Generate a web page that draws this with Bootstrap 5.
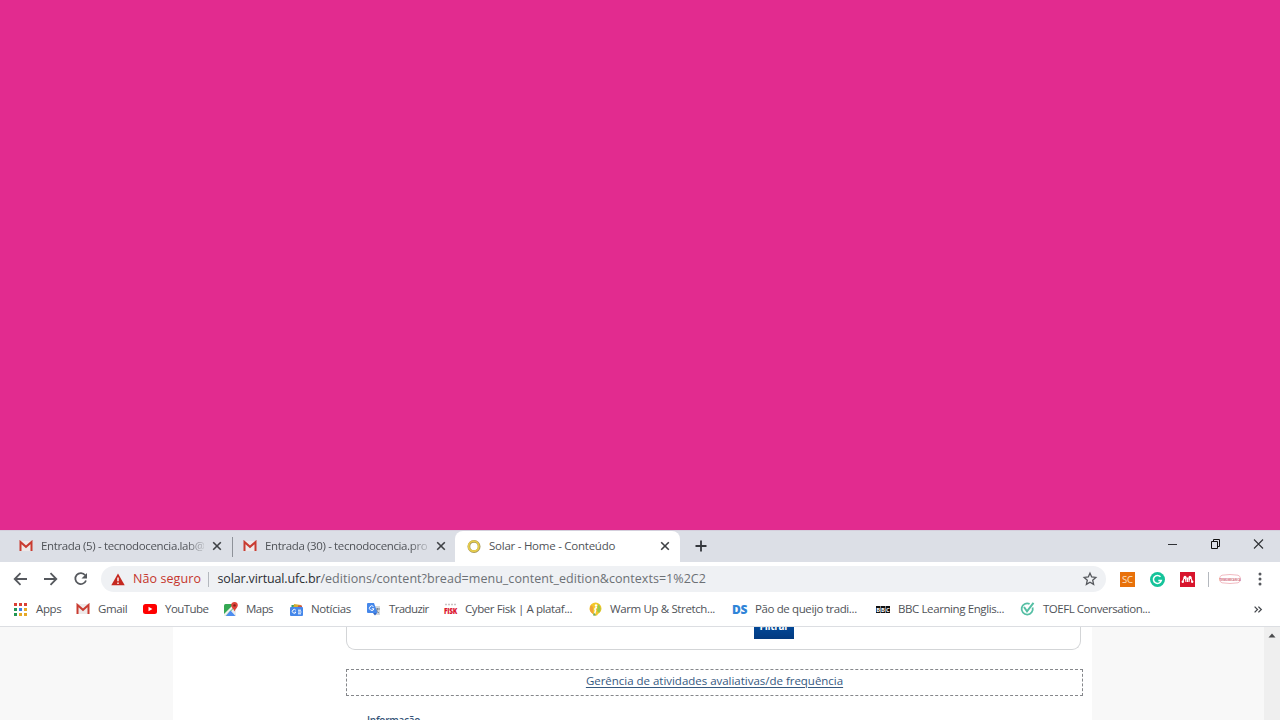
<!DOCTYPE html>
<html lang="pt-BR">
<head>
<meta charset="utf-8">
<title>Solar - Home - Conteúdo</title>
<link href="https://cdn.jsdelivr.net/npm/bootstrap@5.3.0/dist/css/bootstrap.min.css" rel="stylesheet">
<style>
body{width:1280px;height:720px;overflow:hidden;background:#fff;font-family:"Open Sans","Noto Sans",sans-serif;font-size:11.5px;line-height:16px;color:#505358}
svg{display:block;flex:none;overflow:visible}
.cover{height:530px;background:#e22b8f}
.tabstrip{height:32px;background:#dcdfe6;border-top:1px solid #d5cfdc}
.tab{height:31px;letter-spacing:-.37px;padding-bottom:1px}
.tab1{width:232px;padding-left:19px}
.tab2{width:223px;padding-left:11px}
.tab3{width:225px;padding-left:12px;background:#fff;border-radius:8px 8px 0 0;letter-spacing:-.25px}
.tabname{width:163px;margin-left:8px;overflow:hidden}
.fade-end{-webkit-mask-image:linear-gradient(90deg,#000 145px,rgba(0,0,0,.2));mask-image:linear-gradient(90deg,#000 145px,rgba(0,0,0,.2))}
.tabline{width:1px;height:20px;background:#8e9299}
.toolbar{height:34px}
.pill{width:1005px;height:26px;border-radius:13px;background:#eff1f4;font-size:12.5px;margin-left:12px}
.warn{color:#c5352c;letter-spacing:.08px;width:75px;margin-left:8px}
.host{color:#2b2e33;letter-spacing:-.15px;margin-left:8.5px}
.path{color:#6c7075;letter-spacing:.04px}
.vline{width:1px;height:15px;background:#b4b8be}
.marks{height:31px;padding-left:14px;border-bottom:1px solid #dcdee2}
.bm{display:flex;align-items:center;gap:8px;flex:none;height:26px}
.page{height:93px;overflow:hidden}
.side{background:#f8f8f8}
.main{width:919px;padding-left:173px}
.panel{width:735px;height:23px;border:1px solid #d3d5d7;border-top:0;border-radius:0 0 9px 9px;padding-left:407px}
.filter{width:40px;height:12px;background:linear-gradient(#024796,#023a80);color:#fff;font-weight:700;font-size:10px;line-height:16px;overflow:hidden;text-align:center;letter-spacing:-.3px}
.filter span{display:block;margin-top:-9px}
.dash{width:737px;height:27px;margin-top:19px;padding-bottom:3px;border:1px dashed #85878b;letter-spacing:-.02px}
.dash a{color:#36597f;text-underline-offset:1.5px}
.info{color:#365478;font-size:10px;font-weight:600;letter-spacing:-.25px;margin:16px 0 0 21px}
.scroll{width:16px;background:#efefef;padding:6px 0 0 4px}
</style>
</head>
<body>
<svg width="0" height="0" class="position-absolute"><defs>
<symbol id="gm" viewBox="0 0 14 12"><rect x="1" y="1" width="12" height="10" fill="#eee9e9"/><path d="M1.500 11V2L7 6.800 12.500 2v9" fill="none" stroke="#c93c31" stroke-width="2"/></symbol>
<symbol id="x" viewBox="0 0 10 10"><path d="M1.200 1.200l7.600 7.600M8.800 1.200L1.200 8.800" stroke="#3e4145" stroke-width="1.600"/></symbol>
</defs></svg>
<div class="cover"></div>
<div class="tabstrip d-flex align-items-center text-nowrap">
  <div class="tab tab1 d-flex align-items-center"><svg width="14" height="12"><use href="#gm"/></svg><span class="tabname fade-end">Entrada (5) - tecnodocencia.lab@</span><svg class="ms-2" width="10" height="10"><use href="#x"/></svg></div>
  <span class="tabline" style="margin-right:-1px"></span>
  <div class="tab tab2 d-flex align-items-center"><svg width="14" height="12"><use href="#gm"/></svg><span class="tabname fade-end">Entrada (30) - tecnodocencia.pro</span><svg class="ms-2" width="10" height="10"><use href="#x"/></svg></div>
  <div class="tab tab3 d-flex align-items-center"><svg width="14" height="15" viewBox="0 0 15 15"><circle cx="7.500" cy="7.500" r="5.500" fill="#fff" stroke="#a5965c" stroke-width="3"/><circle cx="7.200" cy="7.200" r="5.400" fill="none" stroke="#e7cd4a" stroke-width="2"/></svg><span class="tabname">Solar - Home - Conteúdo</span><svg class="ms-2" width="10" height="10"><use href="#x"/></svg></div>
  <svg style="margin:0 0 1px 15px" width="12" height="12" viewBox="0 0 12 12"><path d="M6 .5v11M.5 6h11" stroke="#34373c" stroke-width="1.800"/></svg>
  <svg class="ms-auto" style="margin:0 16px 6px 0" width="96" height="12" viewBox="0 0 96 12" fill="none" stroke="#303236"><path d="M0 6.500h9"/><path d="M43.500 3.500h6v7h-6zM45.500 3.500v-2h6v7h-2" stroke="#111"/><path d="M86 1.500l9 9M95 1.500l-9 9" stroke-width="1.100"/></svg>
</div>
<div class="toolbar d-flex align-items-center text-nowrap">
  <svg style="margin-left:13px" width="76" height="14" viewBox="0 0 76 14" fill="none" stroke="#55585d" stroke-width="1.800"><path d="M14 7H2M7.500 1.200L1.700 7l5.800 5.800M31 7h12M37.500 1.200L43.300 7l-5.800 5.800"/><path d="M72.200 3.200A5.500 5.500 0 1 0 73 8.500"/><path d="M74 1v5.500h-5.500z" fill="#55585d" stroke="none"/></svg>
  <div class="pill d-flex align-items-center">
    <svg style="margin-left:10px" width="14" height="13" viewBox="0 0 14 13"><path d="M7 .5L13.700 12.300H.3z" fill="#c5281f"/><path d="M7 4.500v3.800M7 9.500V11" stroke="#fff" stroke-width="1.400"/></svg>
    <span class="warn">Não seguro</span><span class="vline"></span><span class="host">solar.virtual.ufc.br</span><span class="path">/editions/content?bread=menu_content_edition&amp;contexts=1%2C2</span>
    <svg class="ms-auto" style="margin-right:9px" width="14" height="14" viewBox="0 0 14 14"><path d="M7 1.200l1.700 3.800 4.100.4-3.100 2.800.9 4.200L7 10.200l-3.600 2.200.9-4.200-3.100-2.800 4.100-.4z" fill="none" stroke="#55585d" stroke-width="1.300"/></svg>
  </div>
  <svg style="margin-left:13.500px" width="15" height="15" viewBox="0 0 15 15"><rect width="15" height="15" fill="#e8710a"/><text x="7.500" y="11" font-size="9.500" text-anchor="middle" fill="#fde3c8">SC</text></svg>
  <svg style="margin-left:15px" width="15" height="15" viewBox="0 0 15 15"><circle cx="7.500" cy="7.500" r="7.500" fill="#15c39a"/><path d="M10.500 4.800A4 4 0 1 0 11.300 8.500H8.300" fill="none" stroke="#fff" stroke-width="1.500"/></svg>
  <svg style="margin-left:15px" width="15" height="15" viewBox="0 0 15 15"><rect width="15" height="15" fill="#d8142c"/><path d="M3 10Q3.400 6 4.800 5.500M7.500 10V6.500M12 10Q11.600 6 10.200 5.500M4.800 5.500Q6 8 6 10M10.200 5.500Q9 8 9 10" fill="none" stroke="#fff" stroke-width="1.100"/><g fill="#fff"><circle cx="5" cy="5.300" r="1.500"/><circle cx="10" cy="5.300" r="1.500"/><circle cx="2.800" cy="9.800" r="1.200"/><circle cx="7.500" cy="6.800" r="1.300"/><circle cx="12.200" cy="9.800" r="1.200"/></g></svg>
  <span class="vline" style="margin-left:13px"></span>
  <svg style="margin-left:10px" width="22" height="10" viewBox="0 0 22 10"><path d="M3 1.200Q11-.2 19 1.200 21.500 2 21.500 5T19 8.800Q11 10.200 3 8.800.5 8 .5 5T3 1.200z" fill="#fff" stroke="#efa9b3" stroke-width=".8"/><text transform="translate(11 6.600) scale(.24 .4)" font-size="10" font-weight="700" text-anchor="middle" fill="#cf6474">TERMOMECANICA</text></svg>
  <svg style="margin-left:17px" width="4" height="14" viewBox="0 0 4 14" fill="#55585d"><circle cx="2" cy="2" r="1.500"/><circle cx="2" cy="7" r="1.500"/><circle cx="2" cy="12" r="1.500"/></svg>
</div>
<div class="marks d-flex text-nowrap">
  <div class="bm" style="width:62px;letter-spacing:-.35px"><svg width="14" height="13" viewBox="0 0 14 13"><path d="M0 0h3v3H0zM5 0h3v3H5zM10 0h3v3h-3z" fill="#da4035"/><path d="M0 5h3v3H0z" fill="#219653"/><path d="M5 5h3v3H5z" fill="#4080e8"/><path d="M10 5h3v3h-3z" fill="#e6a927"/><path d="M0 10h3v3H0z" fill="#219653"/><path d="M5 10h3v3H5zM10 10h3v3h-3z" fill="#e6a927"/></svg>Apps</div>
  <div class="bm" style="width:67px;letter-spacing:-.4px"><svg width="14" height="12"><use href="#gm"/></svg>Gmail</div>
  <div class="bm" style="width:81px;letter-spacing:-.55px"><svg width="14" height="10" viewBox="0 0 14 10"><rect width="14" height="10" rx="2.500" fill="#f00"/><path d="M5.500 2.800v4.400L9.400 5z" fill="#fff"/></svg>YouTube</div>
  <div class="bm" style="width:66px;letter-spacing:-.55px"><svg width="14" height="14" viewBox="0 0 14 14"><rect y="2" width="12" height="12" rx="1.500" fill="#34a853"/><path d="M2 14L12 4v10z" fill="#e9ecee"/><path d="M0 12L9 3l1.500 1.500L1.500 14H0z" fill="#f1f1ed"/><path d="M6.500 8.500l5 5.500H2z" fill="#4d8df0"/><path d="M10.500 0a3.400 3.400 0 0 1 3.300 3.500c0 2-2.300 3-3.300 6-1-3-3.300-4-3.300-6A3.400 3.400 0 0 1 10.500 0z" fill="#df4338"/><circle cx="10.500" cy="3.400" r="1.200" fill="#811f19"/></svg>Maps</div>
  <div class="bm" style="width:77px;letter-spacing:-.36px"><svg width="13" height="13" viewBox="0 0 13 13"><path d="M1.500 2h8v4h-8z" fill="#31a06b"/><path d="M4 1l7 1v4H3z" fill="#d7ae32"/><path d="M8 2.500h4V6H8z" fill="#c95349"/><rect y="4" width="13" height="9" rx="1" fill="#4587ea"/><path d="M5.800 7.200a1.900 1.900 0 1 0 .2 2H4.500M8 7.200h3M8 9h3.500M8 10.800h3" stroke="#fff" fill="none"/></svg>Notícias</div>
  <div class="bm" style="width:77px;letter-spacing:-.62px"><svg width="14" height="14" viewBox="0 0 14 14"><path d="M5 4h8v9H7z" fill="#d4d8dd"/><path d="M8 7h5M10.500 6v1q-.5 3-3 4M9 8q1 2 3 3" stroke="#7b858f" fill="none"/><path d="M1 1h6l3.500 10H1q-1 0-1-1V2q0-1 1-1z" fill="#4587ea"/><path d="M6.500 4.600A2.300 2.300 0 1 0 7 6.800H4.800" stroke="#fff" fill="none"/><path d="M6 11h4l-2 2.500z" fill="#3367c6"/></svg>Traduzir</div>
  <div class="bm" style="width:145px;letter-spacing:-.41px"><svg width="13" height="14" viewBox="0 0 13 14"><path d="M1 2.500h11" stroke="#c9c4c4" stroke-width="1.500" stroke-dasharray="2 1"/><text x="0" y="12" font-size="9.500" font-weight="800" textLength="13" lengthAdjust="spacingAndGlyphs" fill="#db1830">FISK</text></svg>Cyber Fisk | A plataf...</div>
  <div class="bm" style="width:143px;letter-spacing:-.37px"><svg width="13" height="14" viewBox="0 0 13 14"><path d="M6.500.5a6 6 0 0 1 6 6q0 3-3.500 5.500l-1 1.500H5L4 12Q.5 9.500.5 6.500a6 6 0 0 1 6-6z" fill="#f4c82a"/><path d="M2 3a6 6 0 0 0 2 9V5z" fill="#f1a139"/><path d="M9 2a6 6 0 0 1 1 9L8 9z" fill="#9ac94c"/><circle cx="7" cy="3.500" r="1.200" fill="#fff"/><path d="M8 5.500Q4.800 6 6.500 8.500L5.500 12" stroke="#fff" stroke-width="1.500" fill="none"/><path d="M5 10.500l-1 3h3z" fill="#65a96a"/></svg>Warm Up &amp; Stretch...</div>
  <div class="bm" style="width:144px;letter-spacing:-.38px"><svg width="15" height="12" viewBox="0 0 15 12"><text x="0" y="10.500" font-size="12" font-weight="800" textLength="15" lengthAdjust="spacingAndGlyphs" fill="#2f84d8">DS</text></svg>Pão de queijo tradi...</div>
  <div class="bm" style="width:144px;letter-spacing:-.4px"><svg width="14" height="7" viewBox="0 0 14 7"><path d="M0 0h4.300v7H0zM4.800 0h4.400v7H4.800zM9.700 0H14v7H9.700z" fill="#111"/><g fill="#fff" font-size="5.800" font-weight="700" text-anchor="middle" letter-spacing="0"><text x="2.200" y="5.600">B</text><text x="7" y="5.600">B</text><text x="11.800" y="5.600">C</text></g></svg>BBC Learning Englis...</div>
  <div class="bm" style="letter-spacing:-.46px"><svg width="15" height="14" viewBox="0 0 15 14" fill="none" stroke="#55bfa4"><path d="M12.600 5.500a5.600 5.600 0 1 1-3-3.600" stroke-width="1.800"/><path d="M4 5l3 4.300L13.500.8" stroke-width="2"/></svg>TOEFL Conversation...</div>
  <svg class="ms-auto" style="margin:10px 18px 0 0" width="8" height="7" viewBox="0 0 8 7"><path d="M.6.600l2.900 2.900L.6 6.400M4.400.600l2.900 2.900-2.900 2.900" stroke="#45484d" stroke-width="1.300" fill="none"/></svg>
</div>
<div class="page d-flex">
  <div class="side" style="width:173px"></div>
  <div class="main">
    <div class="panel"><div class="filter"><span>Filtrar</span></div></div>
    <div class="dash d-flex align-items-center justify-content-center"><a href="#">Gerência de atividades avaliativas/de frequência</a></div>
    <div class="info">Informação</div>
  </div>
  <div class="side flex-grow-1"></div>
  <div class="scroll"><svg width="8" height="5" viewBox="0 0 8 5"><path d="M4 .5L7.500 4.500h-7z" fill="#4a4b4d"/></svg></div>
</div>
<script src="https://cdn.jsdelivr.net/npm/bootstrap@5.3.0/dist/js/bootstrap.bundle.min.js"></script>
</body>
</html>
